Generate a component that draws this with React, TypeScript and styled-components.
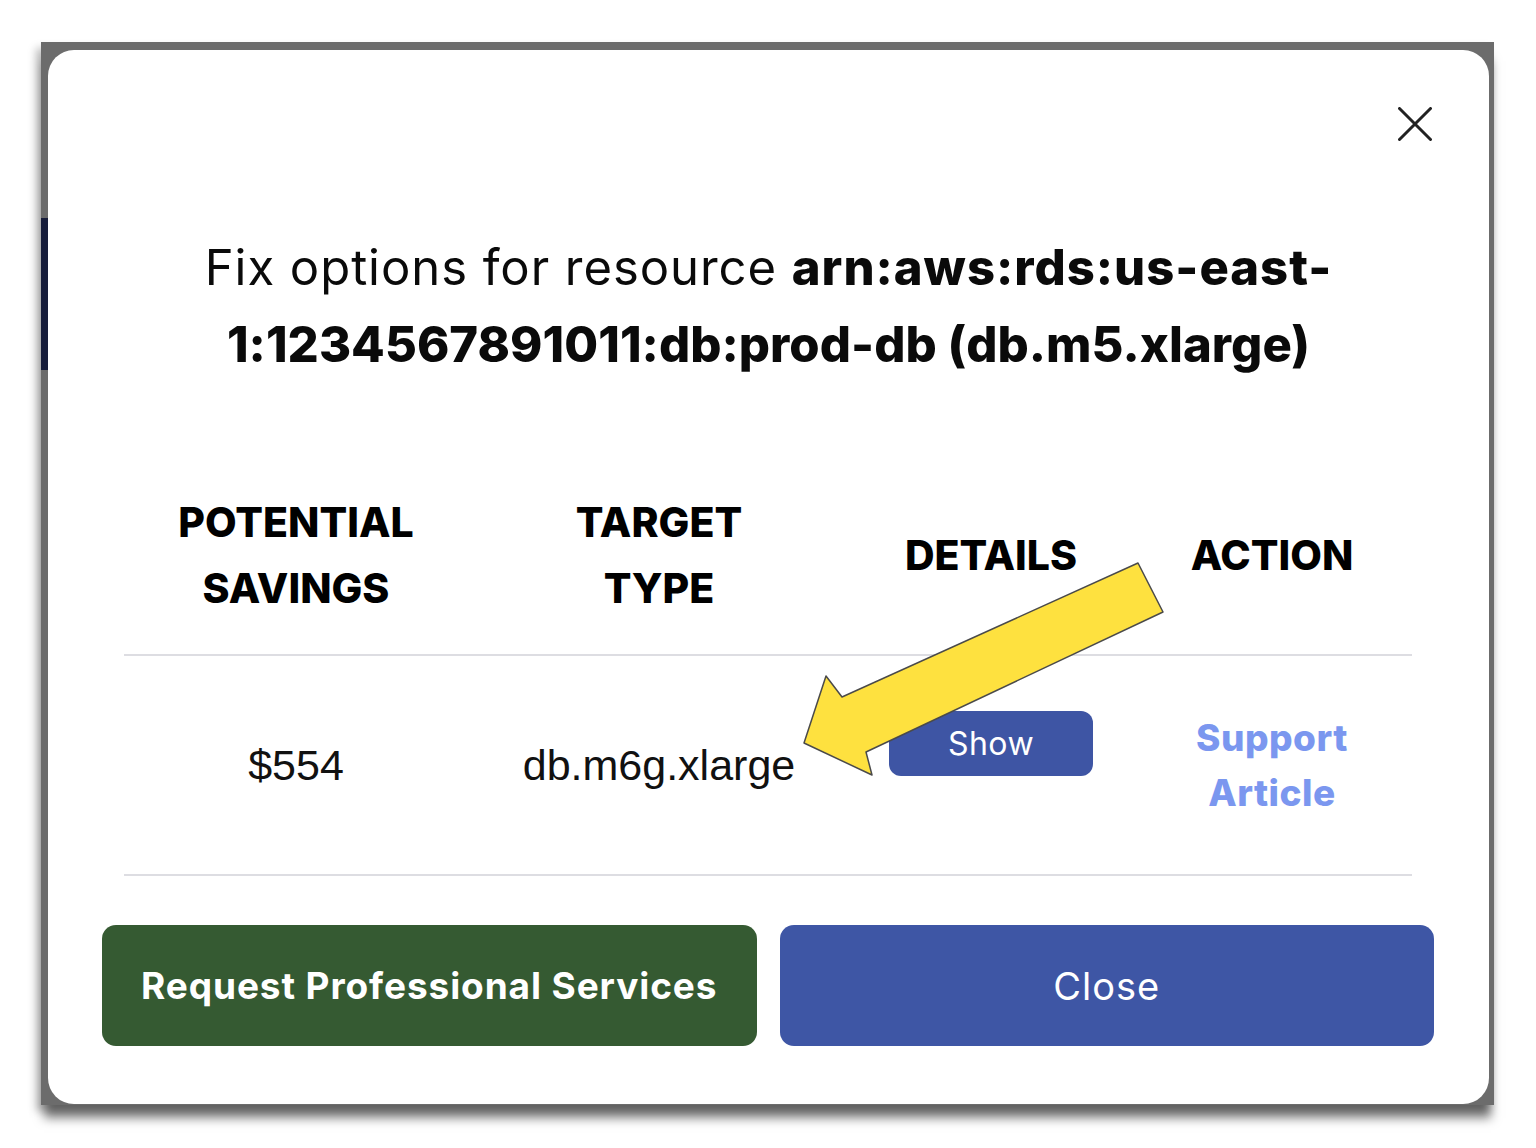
import React from "react";
import styled, { createGlobalStyle } from "styled-components";

const Global = createGlobalStyle`
  html, body { margin: 0; padding: 0; background: #ffffff; }
  body { font-family: "Inter", "Liberation Sans", sans-serif; }
  * { box-sizing: border-box; }
`;

const Page = styled.div`
  min-height: 1148px;
  padding: 42px 42px 0 41px;
  background: #ffffff;
`;

const Frame = styled.div`
  position: relative;
  background: #6c6c6c;
  display: flex;
  padding: 8px 5px 1px 0;
  box-shadow: 0 16px 10px -3px rgba(0, 0, 0, 0.5), -5px 6px 8px rgba(0, 0, 0, 0.25);
`;

const LeftEdge = styled.div`
  width: 7px;
  flex: none;
  display: flex;
  flex-direction: column;
`;

const NavyStrip = styled.div`
  margin-top: 168px;
  height: 152px;
  background: #171d3b;
`;

const Modal = styled.div`
  flex: 1;
  position: relative;
  background: #ffffff;
  border-radius: 26px;
  display: flex;
  flex-direction: column;
  padding-bottom: 58px;
`;

const CloseRow = styled.div`
  display: flex;
  justify-content: flex-end;
  padding: 57px 57px 0 0;
`;

const IconButton = styled.button`
  width: 34px;
  height: 34px;
  padding: 0;
  border: none;
  background: transparent;
  display: flex;
  cursor: pointer;
`;

const Title = styled.h2`
  margin: 88px 0 0;
  text-align: center;
  font-family: "Inter", sans-serif;
  font-weight: 400;
  font-size: 49px;
  line-height: 77px;
  color: #0a0a0a;
  white-space: nowrap;
  letter-spacing: 0.95px;
`;

const Strong = styled.b<{ $tracking: number }>`
  font-weight: 800;
  letter-spacing: ${(p) => p.$tracking}px;
`;

const Table = styled.div`
  margin: 73px 77px 0 76px;
  display: flex;
  flex-direction: column;
`;

const Row = styled.div<{ $height: number }>`
  display: grid;
  grid-template-columns: 344px 382px 282px 280px;
  height: ${(p) => p.$height}px;
  border-bottom: 2px solid #dddde2;
  align-items: center;
  justify-items: center;
`;

const HeadCell = styled.div`
  font-family: "Inter", sans-serif;
  font-weight: 800;
  font-size: 41px;
  line-height: 66px;
  color: #000;
  text-align: center;
  text-transform: uppercase;
`;

const ValueCell = styled.div`
  font-family: "Liberation Sans", Arial, sans-serif;
  font-size: 43px;
  color: #111;
  text-align: center;
`;

const ShowButton = styled.button`
  width: 204px;
  height: 65px;
  margin-bottom: 43px;
  border: none;
  border-radius: 12px;
  background: #3e55a4;
  color: #fff;
  font-family: "Inter", sans-serif;
  font-size: 32px;
  font-weight: 400;
  letter-spacing: 0.5px;
  cursor: pointer;
`;

const LinkCell = styled.a`
  font-family: "Inter", sans-serif;
  font-weight: 800;
  font-size: 37px;
  line-height: 55px;
  color: #7b97ef;
  text-align: center;
  text-decoration: none;
  letter-spacing: 0.5px;
`;

const Footer = styled.div`
  margin-top: 49px;
  padding: 0 55px 0 54px;
  display: grid;
  grid-template-columns: 1fr 1fr;
  gap: 23px;
`;

const FooterButton = styled.button<{ $tone: "green" | "blue" }>`
  height: 121px;
  border: none;
  border-radius: 14px;
  background: ${(p) => (p.$tone === "green" ? "#355a32" : "#3e56a5")};
  color: #fff;
  font-family: "Inter", sans-serif;
  font-size: ${(p) => (p.$tone === "green" ? 37 : 38)}px;
  font-weight: ${(p) => (p.$tone === "green" ? 700 : 400)};
  letter-spacing: ${(p) => (p.$tone === "green" ? 0.9 : 1)}px;
  cursor: pointer;
`;

const Arrow = styled.svg`
  position: absolute;
  left: 740px;
  top: 500px;
  width: 390px;
  height: 240px;
  pointer-events: none;
`;

export default function App() {
  return (
    <>
      <Global />
      <Page>
        <Frame>
          <LeftEdge>
            <NavyStrip />
          </LeftEdge>
          <Modal>
            <CloseRow>
              <IconButton aria-label="Close">
                <svg width="34" height="34" viewBox="0 0 34 34">
                  <path d="M1.5 1.5 L32.5 32.5 M32.5 1.5 L1.5 32.5" stroke="#222" strokeWidth="3" strokeLinecap="round" />
                </svg>
              </IconButton>
            </CloseRow>
            <Title>
              Fix options for resource <Strong $tracking={1}>arn:aws:rds:us-east-</Strong>
              <br />
              <Strong $tracking={0.05}>1:1234567891011:db:prod-db (db.m5.xlarge)</Strong>
            </Title>
            <Table>
              <Row $height={200}>
                <HeadCell>
                  Potential
                  <br />
                  Savings
                </HeadCell>
                <HeadCell>
                  Target
                  <br />
                  Type
                </HeadCell>
                <HeadCell>Details</HeadCell>
                <HeadCell>Action</HeadCell>
              </Row>
              <Row $height={220}>
                <ValueCell>$554</ValueCell>
                <ValueCell>db.m6g.xlarge</ValueCell>
                <ShowButton>Show</ShowButton>
                <LinkCell href="#">
                  Support
                  <br />
                  Article
                </LinkCell>
              </Row>
            </Table>
            <Footer>
              <FooterButton $tone="green">Request Professional Services</FooterButton>
              <FooterButton $tone="blue">Close</FooterButton>
            </Footer>
            <Arrow viewBox="0 0 390 240">
              <polygon
                points="350,13 375,62 78,202 84,225 16,193 38,126 54,147"
                fill="#fee13f"
                stroke="#4a4a4a"
                strokeWidth="1.5"
                strokeLinejoin="round"
              />
            </Arrow>
          </Modal>
        </Frame>
      </Page>
    </>
  );
}
